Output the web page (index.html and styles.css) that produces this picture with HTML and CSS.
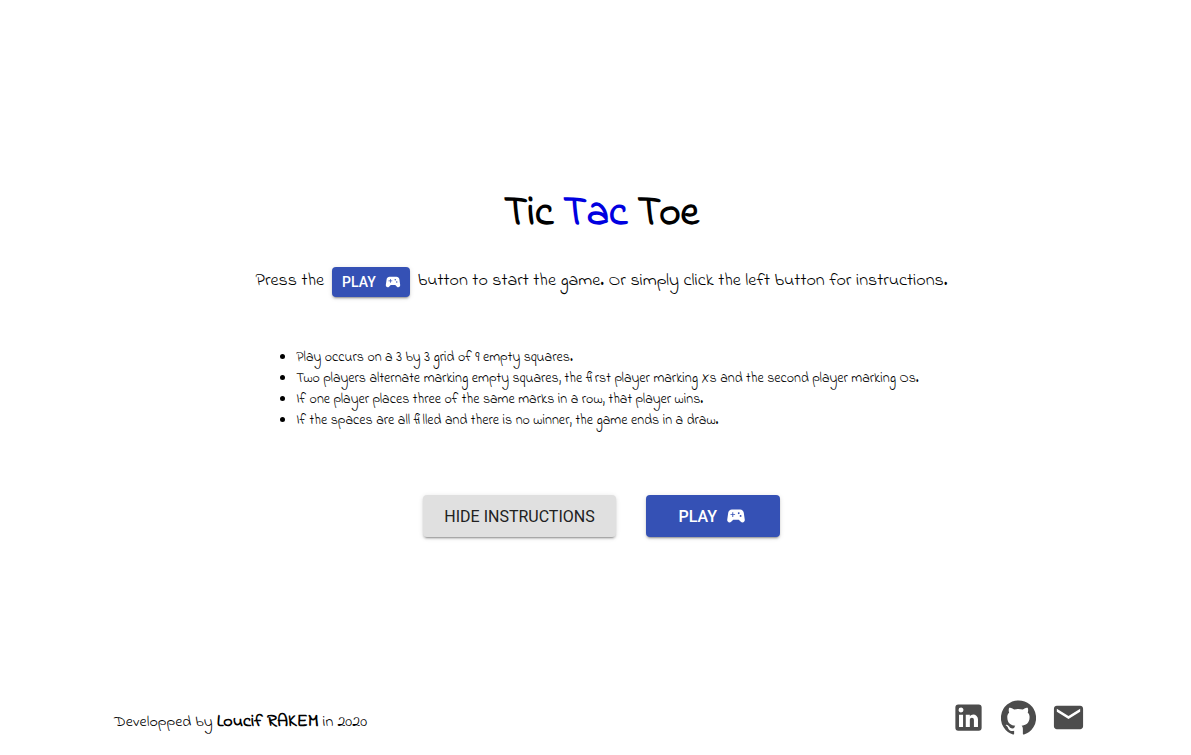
FILE: index.html
```html
<!DOCTYPE html>
<html lang="en">
<head>
<meta charset="utf-8">
<title>Tic Tac Toe</title>
<link rel="stylesheet" href="styles.css">
</head>
<body>
<svg class="sprite" aria-hidden="true">
  <symbol id="pad" viewBox="0 0 24 24"><path d="M21.58 16.09l-1.09-7.66C20.21 6.46 18.52 5 16.53 5H7.47C5.48 5 3.79 6.46 3.51 8.43l-1.09 7.66C2.2 17.63 3.39 19 4.94 19c.68 0 1.32-.27 1.8-.75L9 16h6l2.25 2.25c.48.48 1.13.75 1.8.75 1.56 0 2.75-1.37 2.53-2.91zM11 11H9v2H8v-2H6v-1h2V8h1v2h2v1zm4-1c-.55 0-1-.45-1-1s.45-1 1-1 1 .45 1 1-.45 1-1 1zm2 3c-.55 0-1-.45-1-1s.45-1 1-1 1 .45 1 1-.45 1-1 1z"/></symbol>
</svg>
<main class="home">
  <h1 class="title">Tic <span class="accent">Tac</span> Toe</h1>
  <p class="intro"><span>Press the</span>
    <button class="btn primary small" type="button">Play <svg class="icon"><use href="#pad"/></svg></button>
    <span>button to start the game. Or simply click the left button for instructions.</span></p>
  <ul class="rules">
    <li>Play occurs on a 3 by 3 grid of 9 empty squares.</li>
    <li>Two players alternate marking empty squares, the first player marking Xs and the second player marking Os.</li>
    <li>If one player places three of the same marks in a row, that player wins.</li>
    <li>If the spaces are all filled and there is no winner, the game ends in a draw.</li>
  </ul>
  <div class="actions">
    <button class="btn large" type="button">Hide instructions</button>
    <button class="btn primary large play" type="button">Play <svg class="icon"><use href="#pad"/></svg></button>
  </div>
</main>
<footer class="footer">
  <p class="credit">Developped by <strong class="author">Loucif RAKEM</strong> in 2020</p>
  <nav class="links">
    <a href="#linkedin" aria-label="LinkedIn"><svg class="social" viewBox="0 0 24 24"><path d="M19 3a2 2 0 0 1 2 2v14a2 2 0 0 1-2 2H5a2 2 0 0 1-2-2V5a2 2 0 0 1 2-2h14m-.5 15.500v-5.300a3.260 3.260 0 0 0-3.260-3.260c-.85 0-1.840.52-2.320 1.300v-1.110h-2.790v8.370h2.790v-4.930c0-.77.62-1.400 1.390-1.400a1.400 1.400 0 0 1 1.400 1.400v4.930h2.790M6.880 8.560a1.680 1.680 0 0 0 1.680-1.680c0-.93-.75-1.690-1.680-1.690a1.690 1.690 0 0 0-1.690 1.690c0 .93.76 1.680 1.690 1.680m1.390 9.940v-8.370H5.500v8.370h2.770z"/></svg></a>
    <a href="#github" aria-label="GitHub"><svg class="social" viewBox="0 0 24 24"><path d="M12 .3a12 12 0 0 0-3.800 23.400c.6.1.8-.3.8-.6v-2c-3.300.7-4-1.600-4-1.600-.6-1.400-1.400-1.800-1.400-1.800-1-.7.1-.7.1-.7 1.200 0 1.900 1.200 1.900 1.200 1 1.800 2.800 1.300 3.500 1 0-.8.4-1.300.7-1.600-2.700-.3-5.500-1.300-5.500-6 0-1.200.5-2.300 1.300-3.100-.2-.4-.6-1.600 0-3.200 0 0 1-.3 3.400 1.200a11.500 11.500 0 0 1 6 0c2.300-1.500 3.300-1.200 3.300-1.200.6 1.600.2 2.800 0 3.200.9.8 1.300 1.900 1.300 3.200 0 4.600-2.800 5.600-5.500 5.900.5.4.9 1 .9 2.200v3.300c0 .3.1.7.8.6A12 12 0 0 0 12 .3"/></svg></a>
    <a href="#mail" aria-label="Email"><svg class="social" viewBox="0 0 24 24"><path d="M20 4H4c-1.100 0-1.990.9-1.990 2L2 18c0 1.100.9 2 2 2h16c1.100 0 2-.9 2-2V6c0-1.100-.9-2-2-2zm0 4l-8 5-8-5V6l8 5 8-5v2z"/></svg></a>
  </nav>
</footer>
</body>
</html>
```
FILE: styles.css
```css
* { box-sizing: border-box; }
body {
  margin: 0;
  min-height: 100vh;
  display: flex;
  flex-direction: column;
  background: #fff;
  color: #000;
  font-family: "Indie Flower", "Open Sans", sans-serif;
}
.sprite { display: none; }
.home {
  flex: 1;
  display: flex;
  flex-direction: column;
  align-items: center;
  padding: 186px 16px 0 28px;
}
.title { margin: 0; font-size: 41px; line-height: 56px; font-weight: 700; }
.accent { color: #0000e0; }
.intro {
  display: flex;
  align-items: center;
  gap: 8px;
  margin: 25px 0 0;
  font-size: 18px;
  line-height: 26px;
}
.intro span { padding-bottom: 2px; }
.rules { margin: 50px 0 0; padding: 0 12px 0 24px; font-size: 14px; line-height: 21px; }
.actions { display: flex; gap: 30px; margin-top: 64px; }
.btn {
  display: inline-flex;
  align-items: center;
  justify-content: center;
  border: 0;
  border-radius: 4px;
  background: #e0e0e0;
  color: #212121;
  font-family: Roboto, sans-serif;
  font-weight: 400;
  text-transform: uppercase;
  box-shadow: 0 3px 1px -2px rgba(0,0,0,.2), 0 2px 2px 0 rgba(0,0,0,.14), 0 1px 5px 0 rgba(0,0,0,.12);
}
.primary { background: #3551b5; color: #fff; font-weight: 500; }
.small { height: 30px; padding: 0 8px 0 10px; gap: 8px; font-size: 14px; }
.large { height: 42px; padding: 0 21px; gap: 8px; font-size: 16px; }
.play { width: 134px; }
.icon { width: 18px; height: 18px; fill: currentColor; }
.large .icon { width: 22px; height: 22px; }
.footer {
  display: flex;
  align-items: center;
  justify-content: space-between;
  padding: 0 105px 20px 114px;
}
.credit { margin: 0; padding-top: 8px; font-size: 16px; line-height: 24px; }
.author { font-size: 18px; }
.links { display: flex; gap: 15px; }
.links a { display: block; color: #4c4c4c; }
.social { display: block; width: 35px; height: 35px; fill: currentColor; }
```
